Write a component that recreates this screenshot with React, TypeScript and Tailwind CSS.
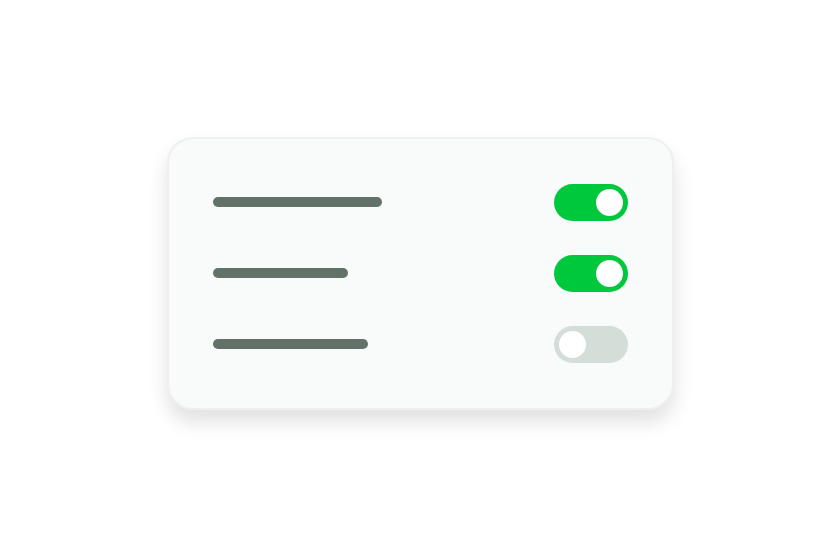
const rows = [
  { width: 'w-[169px]', on: true },
  { width: 'w-[135px]', on: true },
  { width: 'w-[155px]', on: false },
];

function Toggle({ on }: { on: boolean }) {
  return (
    <div
      className={`flex h-[37px] w-[74px] items-center rounded-full p-[5px] ${
        on ? 'justify-end bg-[#00c83d]' : 'justify-start bg-[#d4ded9]'
      }`}
    >
      <div className="h-[27px] w-[27px] rounded-full bg-white" />
    </div>
  );
}

export default function App() {
  return (
    <div className="flex h-[546px] w-full items-center justify-center bg-white">
      <div className="flex w-[507px] flex-col gap-[34px] rounded-[26px] border-2 border-[#edf0ee] bg-[#f9fbfa] px-[44px] py-[45px] shadow-[0_12px_20px_rgba(0,0,0,0.12)]">
        {rows.map((r, i) => (
          <div key={i} className="flex items-center justify-between">
            <div className={`h-[10px] ${r.width} rounded-full bg-[#627268]`} />
            <Toggle on={r.on} />
          </div>
        ))}
      </div>
    </div>
  );
}
